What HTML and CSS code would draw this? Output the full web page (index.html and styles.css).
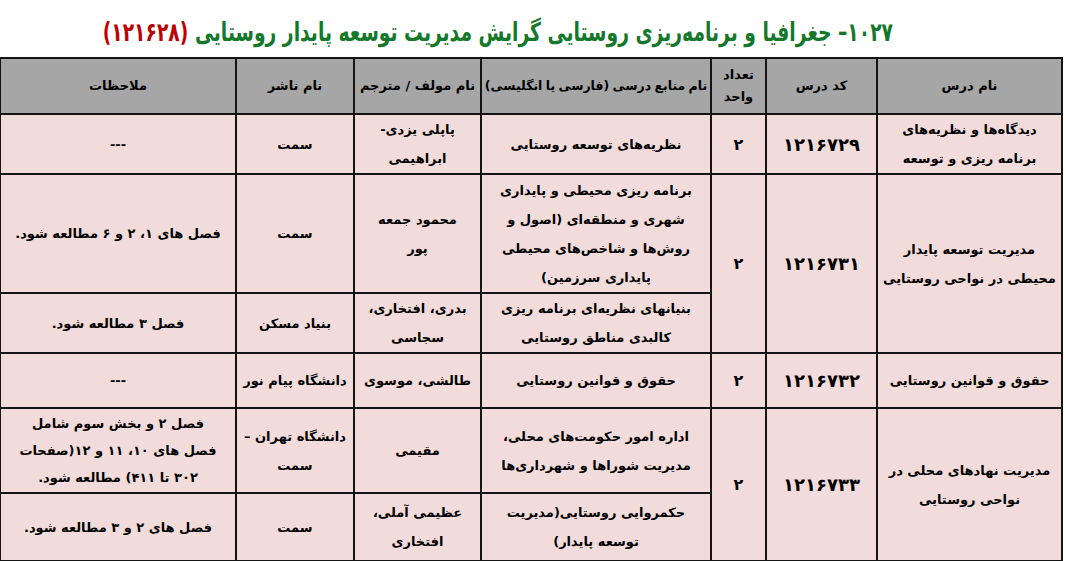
FILE: index.html
```html
<!DOCTYPE html>
<html lang="fa" dir="rtl">
<head>
<meta charset="utf-8">
<title>۱۰۲۷– جغرافیا و برنامه‌ریزی روستایی</title>
<link rel="stylesheet" href="styles.css">
</head>
<body>
<div class="title-wrap">
  <h1 class="title">۱۰۲۷– جغرافیا و برنامه‌ریزی روستایی گرایش مدیریت توسعه پایدار روستایی <span class="code">(۱۲۱۶۲۸)</span></h1>
</div>
<table class="grid">
  <colgroup>
    <col class="c-name"><col class="c-code"><col class="c-unit"><col class="c-src"><col class="c-auth"><col class="c-pub"><col class="c-note">
  </colgroup>
  <thead>
    <tr class="r-head">
      <th>نام درس</th>
      <th>کد درس</th>
      <th>تعداد<br>واحد</th>
      <th class="nowrap">نام منابع درسی (فارسی یا انگلیسی)</th>
      <th>نام مولف / مترجم</th>
      <th>نام ناشر</th>
      <th>ملاحظات</th>
    </tr>
  </thead>
  <tbody>
    <tr class="r1">
      <td>دیدگاه‌ها و نظریه‌های<br>برنامه ریزی و توسعه</td>
      <td class="num">۱۲۱۶۷۲۹</td>
      <td class="unit">۲</td>
      <td>نظریه‌های توسعه روستایی</td>
      <td>پاپلی یزدی-<br>ابراهیمی</td>
      <td>سمت</td>
      <td>---</td>
    </tr>
    <tr class="r2a">
      <td rowspan="2">مدیریت توسعه پایدار<br>محیطی در نواحی روستایی</td>
      <td rowspan="2" class="num">۱۲۱۶۷۳۱</td>
      <td rowspan="2" class="unit">۲</td>
      <td>برنامه ریزی محیطی و پایداری<br>شهری و منطقه‌ای (اصول و<br>روش‌ها و شاخص‌های محیطی<br>پایداری سرزمین)</td>
      <td>محمود جمعه<br>پور</td>
      <td>سمت</td>
      <td>فصل های ۱، ۲ و ۶ مطالعه شود.</td>
    </tr>
    <tr class="r2b">
      <td>بنیانهای نظریه‌ای برنامه ریزی<br>کالبدی مناطق روستایی</td>
      <td>بدری، افتخاری،<br>سجاسی</td>
      <td>بنیاد مسکن</td>
      <td>فصل ۳ مطالعه شود.</td>
    </tr>
    <tr class="r3">
      <td>حقوق و قوانین روستایی</td>
      <td class="num">۱۲۱۶۷۳۲</td>
      <td class="unit">۲</td>
      <td>حقوق و قوانین روستایی</td>
      <td>طالشی، موسوی</td>
      <td>دانشگاه پیام نور</td>
      <td>---</td>
    </tr>
    <tr class="r4a">
      <td rowspan="2">مدیریت نهادهای محلی در<br>نواحی روستایی</td>
      <td rowspan="2" class="num">۱۲۱۶۷۳۳</td>
      <td rowspan="2" class="unit">۲</td>
      <td>اداره امور حکومت‌های محلی،<br>مدیریت شوراها و شهرداری‌ها</td>
      <td>مقیمی</td>
      <td>دانشگاه تهران –<br>سمت</td>
      <td class="tight">فصل ۲ و بخش سوم شامل<br>فصل های ۱۰، ۱۱ و ۱۲(صفحات<br>۳۰۲ تا ۴۱۱) مطالعه شود.</td>
    </tr>
    <tr class="r4b">
      <td>حکمروایی روستایی(مدیریت<br>توسعه پایدار)</td>
      <td>عظیمی آملی،<br>افتخاری</td>
      <td>سمت</td>
      <td>فصل های ۲ و ۳ مطالعه شود.</td>
    </tr>
  </tbody>
</table>
</body>
</html>
```
FILE: styles.css
```css
html, body {
  margin: 0;
  padding: 0;
  background: #ffffff;
}
body {
  width: 1066px;
  height: 561px;
  overflow: hidden;
  font-family: "DejaVu Sans", sans-serif;
  color: #000;
}
.title-wrap {
  height: 57px;
  display: flex;
  justify-content: center;
  align-items: center;
  padding: 7px 70px 0 0;
  box-sizing: border-box;
}
.title {
  margin: 0;
  font-size: 26px;
  line-height: 32px;
  font-weight: bold;
  color: #13782a;
  white-space: nowrap;
  transform: scaleX(0.72);
}
.title .code {
  color: #c00000;
}
.grid {
  margin: 0 3px 0 0;
  border-collapse: collapse;
  table-layout: fixed;
  width: 1063px;
  font-size: 13px;
  font-weight: bold;
}
.c-name { width: 185px; }
.c-code { width: 111px; }
.c-unit { width: 55px; }
.c-src { width: 230px; }
.c-auth { width: 127px; }
.c-pub { width: 118px; }
.c-note { width: 236px; }
.grid th, .grid td {
  border: 2px solid #141414;
  padding: 0 3px;
  text-align: center;
  vertical-align: middle;
  line-height: 29px;
  overflow: hidden;
}
.grid th {
  background: #a6a6a6;
  font-size: 13px;
  line-height: 22px;
}
.grid th.nowrap {
  white-space: nowrap;
  padding: 0;
  font-size: 12.5px;
  word-spacing: -1px;
}
.grid td {
  background: #f2dcdb;
}
.grid td.num {
  font-size: 18px;
  letter-spacing: 3px;
}
.grid td.unit {
  font-size: 16px;
}
.grid td.tight {
  line-height: 27px;
}
.r-head { height: 56px; }
.r1 { height: 59px; }
.r2a { height: 119px; }
.r2b { height: 59px; }
.r3 { height: 55px; }
.r4a { height: 85px; }
.r4b { height: 68px; }
```
